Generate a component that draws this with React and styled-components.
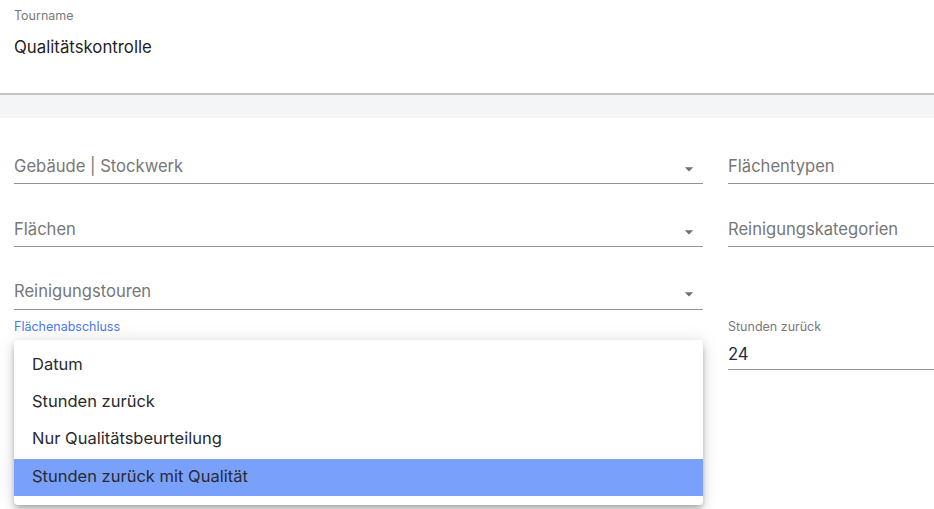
import styled, { createGlobalStyle } from "styled-components";

const GlobalStyle = createGlobalStyle`
  html, body { margin: 0; padding: 0; background: #ffffff; }
  body { font-family: Inter, "Noto Sans", Arial, sans-serif; overflow: hidden; }
`;

const Page = styled.div`
  width: 934px;
  height: 509px;
  position: relative;
  overflow: hidden;
  background: #fff;
`;

const TopCard = styled.div`
  height: 95px;
  padding: 8px 14px 0;
  box-sizing: border-box;
  background: #fff;
  border-bottom: 2px solid #c4c4c4;
  box-shadow: 0 1px 2px rgba(0, 0, 0, 0.12);
`;

const SmallLabel = styled.div`
  font-size: 12.5px;
  line-height: 16px;
  color: ${({ $active }) => ($active ? "#4a78f6" : "#7a7a7a")};
  margin-bottom: ${({ $gap }) => $gap || 0}px;
`;

const TitleValue = styled.div`
  margin-top: 13px;
  font-size: 16.8px;
  line-height: 20px;
  color: #1f1f24;
`;

const Band = styled.div`
  height: 23px;
  background: #f4f5f7;
`;

const Form = styled.div`
  display: grid;
  grid-template-columns: 689px 1fr;
  column-gap: 25px;
  grid-auto-rows: 63px;
  padding: 3px 0 0 14px;
`;

const Field = styled.div`
  display: flex;
  flex-direction: column;
  justify-content: ${({ $top }) => ($top ? "flex-start" : "flex-end")};
  padding-top: ${({ $top }) => ($top ? 9 : 0)}px;
  position: relative;
  min-width: 0;
`;

const InputLine = styled.div`
  display: flex;
  align-items: center;
  height: 24px;
  padding-bottom: ${({ $pb }) => $pb ?? 5}px;
  border-bottom: 1px solid #949494;
  font-size: 16.6px;
  color: ${({ $filled }) => ($filled ? "#1f2a44" : "#777777")};
  white-space: nowrap;
`;

const Text = styled.span`
  flex: 1;
`;

const Arrow = styled.svg`
  width: 20px;
  height: 20px;
  margin-right: 4px;
  margin-top: 6px;
  fill: #6f6f6f;
`;

const Menu = styled.div`
  position: absolute;
  left: 14px;
  top: 340px;
  width: 689px;
  padding: 7px 0 9px;
  background: #fff;
  border-radius: 4px;
  box-shadow: 0 3px 5px -1px rgba(0, 0, 0, 0.2), 0 6px 10px 0 rgba(0, 0, 0, 0.14),
    0 1px 18px 0 rgba(0, 0, 0, 0.12);
`;

const MenuItem = styled.div`
  height: 37px;
  line-height: 34px;
  padding-left: 18px;
  font-size: 16.5px;
  color: #2a2a2e;
  background: ${({ $selected }) => ($selected ? "#79a1fb" : "transparent")};
  margin-top: ${({ $selected }) => ($selected ? 1 : 0)}px;
`;

const DropArrow = () => (
  <Arrow viewBox="0 0 24 24">
    <path d="M7 10l5 5 5-5z" />
  </Arrow>
);

const options = [
  "Datum",
  "Stunden zurück",
  "Nur Qualitätsbeurteilung",
  "Stunden zurück mit Qualität",
];

export default function App() {
  return (
    <>
      <GlobalStyle />
      <Page>
        <TopCard>
          <SmallLabel>Tourname</SmallLabel>
          <TitleValue>Qualitätskontrolle</TitleValue>
        </TopCard>
        <Band />
        <Form>
          <Field>
            <InputLine>
              <Text>Gebäude | Stockwerk</Text>
              <DropArrow />
            </InputLine>
          </Field>
          <Field>
            <InputLine>Flächentypen</InputLine>
          </Field>
          <Field>
            <InputLine>
              <Text>Flächen</Text>
              <DropArrow />
            </InputLine>
          </Field>
          <Field>
            <InputLine>Reinigungskategorien</InputLine>
          </Field>
          <Field>
            <InputLine $pb={6}>
              <Text>Reinigungstouren</Text>
              <DropArrow />
            </InputLine>
          </Field>
          <Field />
          <Field $top>
            <SmallLabel $active $gap={7}>Flächenabschluss</SmallLabel>
          </Field>
          <Field $top>
            <SmallLabel $gap={7}>Stunden zurück</SmallLabel>
            <InputLine $filled $pb={3}>24</InputLine>
          </Field>
        </Form>
        <Menu>
          {options.map((o, i) => (
            <MenuItem key={o} $selected={i === options.length - 1}>
              {o}
            </MenuItem>
          ))}
        </Menu>
      </Page>
    </>
  );
}
